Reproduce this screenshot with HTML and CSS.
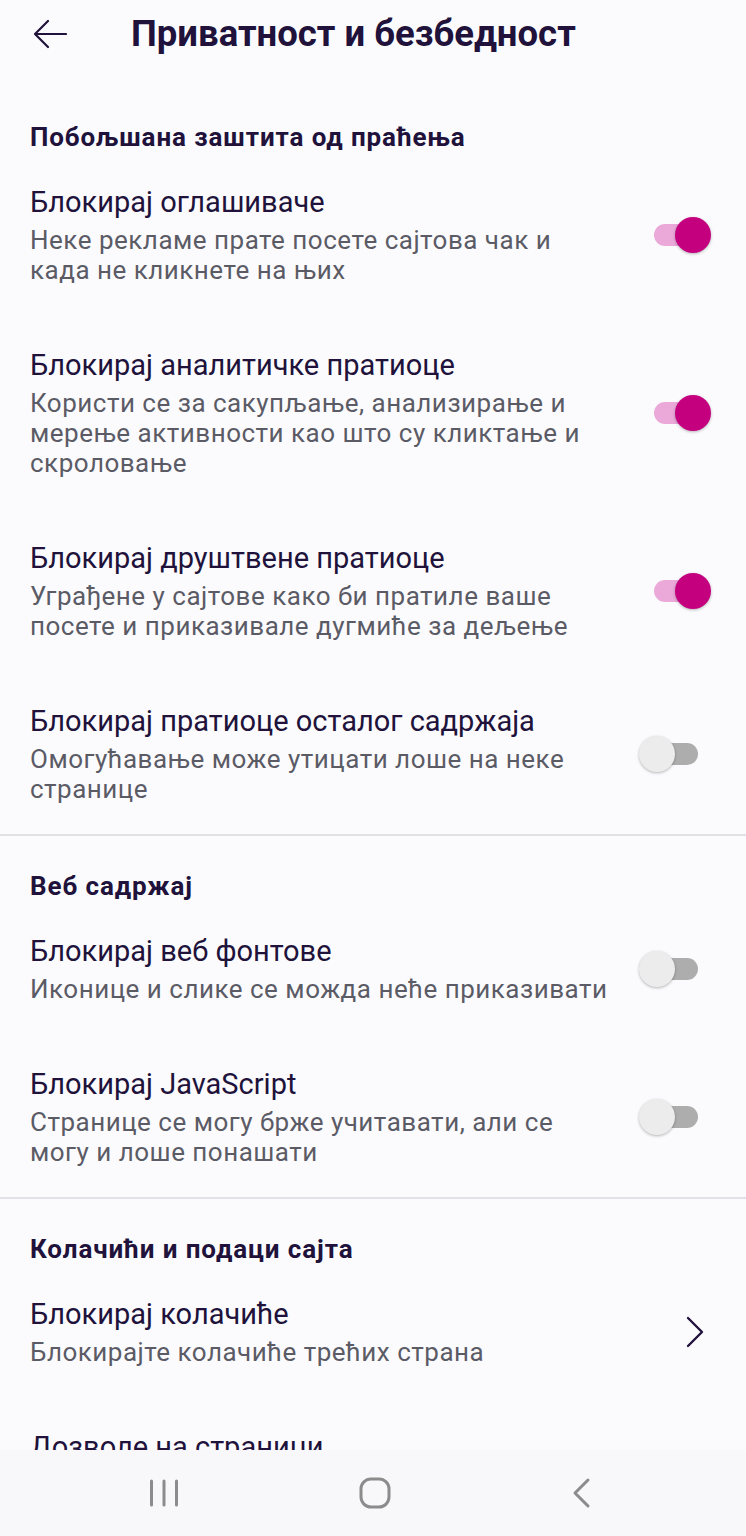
FILE: index.html
```html
<!DOCTYPE html>
<html lang="sr">
<head>
<meta charset="utf-8">
<title>Приватност и безбедност</title>
<link rel="stylesheet" href="styles.css">
</head>
<body>
<div class="screen">
  <div class="main">
    <header class="appbar">
      <svg class="back" width="34" height="30" viewBox="0 0 34 30" aria-hidden="true">
        <path d="M2 15 H33 M15 2 L2 15 L15 28" fill="none" stroke="#20123a" stroke-width="2.2" stroke-linecap="round" stroke-linejoin="round"/>
      </svg>
      <h1 class="apptitle">Приватност и безбедност</h1>
    </header>

    <section class="group first">
      <h2 class="group-title">Побољшана заштита од праћења</h2>
      <div class="row">
        <div class="text">
          <div class="title">Блокирај оглашиваче</div>
          <div class="sub">Неке рекламе прате посете сајтова чак и<br>када не кликнете на њих</div>
        </div>
        <div class="switch on"><span class="track"></span><span class="thumb"></span></div>
      </div>
      <div class="row">
        <div class="text">
          <div class="title">Блокирај аналитичке пратиоце</div>
          <div class="sub">Користи се за сакупљање, анализирање и<br>мерење активности као што су кликтање и<br>скроловање</div>
        </div>
        <div class="switch on"><span class="track"></span><span class="thumb"></span></div>
      </div>
      <div class="row">
        <div class="text">
          <div class="title">Блокирај друштвене пратиоце</div>
          <div class="sub">Уграђене у сајтове како би пратиле ваше<br>посете и приказивале дугмиће за дељење</div>
        </div>
        <div class="switch on"><span class="track"></span><span class="thumb"></span></div>
      </div>
      <div class="row">
        <div class="text">
          <div class="title">Блокирај пратиоце осталог садржаја</div>
          <div class="sub">Омогућавање може утицати лоше на неке<br>странице</div>
        </div>
        <div class="switch"><span class="track"></span><span class="thumb"></span></div>
      </div>
    </section>

    <section class="group">
      <h2 class="group-title">Веб садржај</h2>
      <div class="row">
        <div class="text">
          <div class="title">Блокирај веб фонтове</div>
          <div class="sub">Иконице и слике се можда неће приказивати</div>
        </div>
        <div class="switch"><span class="track"></span><span class="thumb"></span></div>
      </div>
      <div class="row">
        <div class="text">
          <div class="title">Блокирај JavaScript</div>
          <div class="sub">Странице се могу брже учитавати, али се<br>могу и лоше понашати</div>
        </div>
        <div class="switch"><span class="track"></span><span class="thumb"></span></div>
      </div>
    </section>

    <section class="group">
      <h2 class="group-title">Колачићи и подаци сајта</h2>
      <div class="row">
        <div class="text">
          <div class="title">Блокирај колачиће</div>
          <div class="sub">Блокирајте колачиће трећих страна</div>
        </div>
        <div class="chev">
          <svg width="20" height="32" viewBox="0 0 20 32" aria-hidden="true">
            <path d="M3 2 L17 16 L3 30" fill="none" stroke="#20123a" stroke-width="2.4" stroke-linecap="round" stroke-linejoin="round"/>
          </svg>
        </div>
      </div>
      <div class="row">
        <div class="text">
          <div class="title">Дозволе на страници</div>
        </div>
      </div>
    </section>
  </div>

  <nav class="navbar">
    <svg width="30" height="30" viewBox="0 0 30 30" aria-hidden="true">
      <path d="M2.5 3 V27 M15 3 V27 M27.5 3 V27" stroke="#8c8c8c" stroke-width="3" stroke-linecap="round"/>
    </svg>
    <svg width="34" height="34" viewBox="0 0 34 34" aria-hidden="true">
      <rect x="3" y="3" width="28" height="28" rx="10" fill="none" stroke="#8c8c8c" stroke-width="3"/>
    </svg>
    <svg width="22" height="32" viewBox="0 0 22 32" aria-hidden="true">
      <path d="M18 3 L5 16 L18 29" fill="none" stroke="#8c8c8c" stroke-width="3" stroke-linecap="round" stroke-linejoin="round"/>
    </svg>
  </nav>
</div>
</body>
</html>
```

FILE: styles.css
```css
* { box-sizing: border-box; }

html, body {
  margin: 0;
  padding: 0;
  background: #fbfbfe;
}

body {
  font-family: Roboto, "Noto Sans", "DejaVu Sans", sans-serif;
  color: #20123a;
}

.screen {
  width: 746px;
  height: 1536px;
  display: flex;
  flex-direction: column;
}

.main {
  flex: 1;
  overflow: hidden;
}

.appbar {
  height: 68px;
  display: flex;
  align-items: center;
  padding-left: 33px;
}

.back {
  flex: none;
  display: block;
}

.apptitle {
  margin: 0 0 0 64px;
  font-size: 36.5px;
  font-weight: 700;
  line-height: 42px;
  color: #20123a;
}

.group {
  border-top: 2px solid #e1e1e7;
}

.group.first {
  border-top: none;
  padding-top: 54px;
}

.group-title {
  margin: 0;
  padding: 35px 30px 0;
  font-size: 26px;
  font-weight: 700;
  letter-spacing: 0.9px;
  line-height: 30px;
  color: #20123a;
}

.group.first .group-title {
  padding-top: 0;
}

.row {
  display: flex;
  align-items: center;
  padding: 32px 35px 30px 30px;
}

.text {
  flex: 1;
  min-width: 0;
}

.title {
  font-size: 29px;
  line-height: 36px;
  margin-bottom: 5px;
  color: #20123a;
}

.sub {
  font-size: 26px;
  letter-spacing: 0.5px;
  line-height: 30px;
  color: #5b5b66;
}

.switch {
  position: relative;
  flex: none;
  width: 72px;
  height: 36px;
}

.track {
  position: absolute;
  left: 15px;
  top: 7px;
  width: 44px;
  height: 22px;
  border-radius: 11px;
  background: #adadad;
}

.thumb {
  position: absolute;
  left: 0;
  top: 0;
  width: 36px;
  height: 36px;
  border-radius: 50%;
  background: #ececec;
  box-shadow: 0 1px 3px rgba(0, 0, 0, 0.28);
}

.switch.on .track {
  background: #eaa9d8;
}

.switch.on .thumb {
  left: auto;
  right: 0;
  background: #c5007f;
}

.chev {
  flex: none;
  width: 72px;
  display: flex;
  justify-content: flex-end;
  padding-right: 6px;
}

.chev svg {
  display: block;
}

.navbar {
  flex: none;
  height: 86px;
  background: #f8f8fa;
  display: flex;
  align-items: center;
  justify-content: space-between;
  padding: 0 154px 0 149px;
}

.navbar svg {
  display: block;
}
```
